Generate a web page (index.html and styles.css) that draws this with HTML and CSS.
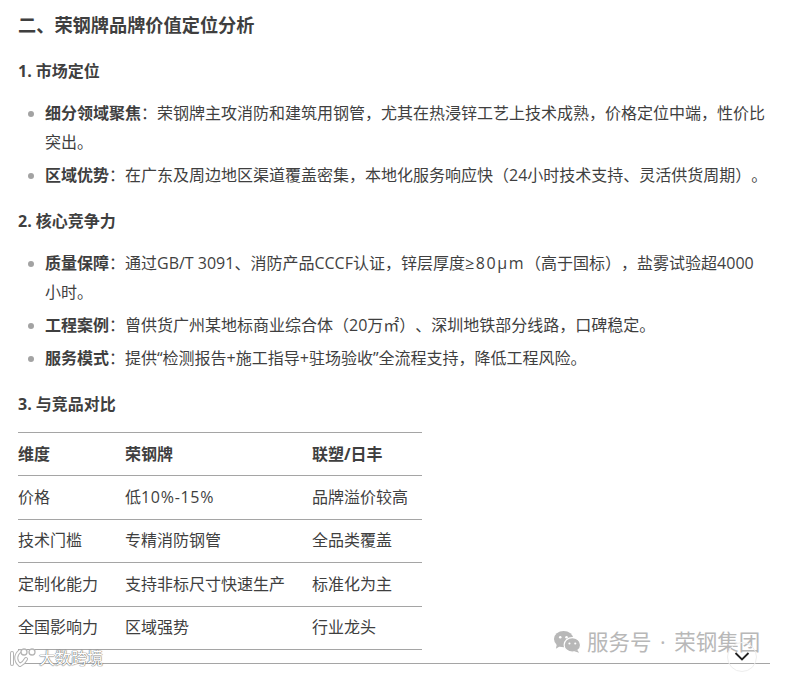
FILE: index.html
```html
<!DOCTYPE html>
<html lang="zh-CN">
<head>
<meta charset="utf-8">
<title>荣钢牌品牌价值定位分析</title>
<link rel="stylesheet" href="styles.css">
</head>
<body>
<main class="article">
  <h2 class="h2">二、荣钢牌品牌价值定位分析</h2>
  <h3 class="h3 first">1. 市场定位</h3>
  <ul class="list">
    <li><strong>细分领域聚焦</strong>：荣钢牌主攻消防和建筑用钢管，尤其在热浸锌工艺上技术成熟，价格定位中端，性价比突出。</li>
    <li><strong>区域优势</strong>：在广东及周边地区渠道覆盖密集，本地化服务响应快（24小时技术支持、灵活供货周期）。</li>
  </ul>
  <h3 class="h3">2. 核心竞争力</h3>
  <ul class="list">
    <li><strong>质量保障</strong>：通过GB/T 3091、消防产品CCCF认证，锌层厚度<span class="wider">≥80μm</span>（高于国标），盐雾试验超4000<span class="keep">小时。</span></li>
    <li><strong>工程案例</strong>：曾供货广州某地标商业综合体（20万㎡）、深圳地铁部分线路，口碑稳定。</li>
    <li><strong>服务模式</strong>：提供“检测报告+施工指导+驻场验收”全流程支持，降低工程风险。</li>
  </ul>
  <h3 class="h3">3. 与竞品对比</h3>
  <table class="compare">
    <thead>
      <tr><th class="col-a">维度</th><th class="col-b">荣钢牌</th><th class="col-c">联塑/日丰</th></tr>
    </thead>
    <tbody>
      <tr><td>价格</td><td>低<span class="wide">10%-15%</span></td><td>品牌溢价较高</td></tr>
      <tr><td>技术门槛</td><td>专精消防钢管</td><td>全品类覆盖</td></tr>
      <tr><td>定制化能力</td><td>支持非标尺寸快速生产</td><td>标准化为主</td></tr>
      <tr><td>全国影响力</td><td>区域强势</td><td>行业龙头</td></tr>
    </tbody>
  </table>
  <hr class="rule">
</main>
<div class="mark-left">
  <svg class="mark-left-icon" width="30" height="20" viewBox="0 0 30 20" aria-hidden="true">
    <path d="M3 5v11M11 3C6 7 6 13 11 17M17 11c-2 4-4 5-6 6" fill="none" stroke="#b4b4b4" stroke-width="4" stroke-linecap="round"/>
    <path d="M3 5v11M11 3C6 7 6 13 11 17M17 11c-2 4-4 5-6 6" fill="none" stroke="#fff" stroke-width="2" stroke-linecap="round"/>
    <circle cx="15" cy="4" r="3" fill="#fff" stroke="#b4b4b4" stroke-width="1.300"/>
    <circle cx="23" cy="4" r="3" fill="#fff" stroke="#b4b4b4" stroke-width="1.300"/>
  </svg>
  <span>大数跨境</span>
</div>
<div class="mark-right">
  <svg class="mark-right-icon" width="29" height="24" viewBox="0 0 30 24" aria-hidden="true">
    <ellipse cx="11" cy="9" rx="10" ry="8.5" fill="#b8b8b8"/>
    <path d="M4 14l-1 5 5-3z" fill="#b8b8b8"/>
    <ellipse cx="20" cy="15" rx="8.5" ry="7.5" fill="#b8b8b8" stroke="#fff" stroke-width="1.2"/>
    <path d="M25 20l2 3-5-1.500z" fill="#b8b8b8"/>
    <circle cx="7.500" cy="7" r="1.300" fill="#fff"/>
    <circle cx="14" cy="7" r="1.300" fill="#fff"/>
    <circle cx="17" cy="13.500" r="1.100" fill="#fff"/>
    <circle cx="23" cy="13.500" r="1.100" fill="#fff"/>
  </svg>
  <span>服务号 · 荣钢集团</span>
</div>
<div class="more" aria-hidden="true">
  <svg width="16" height="9" viewBox="0 0 16 9"><path d="M1.500 1l6.500 6.500L14.500 1" fill="none" stroke="#222" stroke-width="1.800"/></svg>
</div>
</body>
</html>
```
FILE: styles.css
```css
html, body {
  margin: 0;
  padding: 0;
  height: 673px;
  overflow: hidden;
  background: #fff;
}
body {
  position: relative;
  font-family: "Open Sans", "Noto Sans CJK SC", sans-serif;
  font-size: 16px;
  color: #3f3f3f;
  text-spacing-trim: space-all;
}
.article {
  padding: 11px 16px 0 18px;
}
.h2 {
  margin: 0;
  font-size: 18.2px;
  line-height: 29px;
  font-weight: 700;
}
.h3 {
  margin: 17px 0 0;
  font-size: 16px;
  line-height: 29px;
  font-weight: 700;
}
.list {
  margin: 13px 0 0;
  padding: 0 0 0 27px;
  list-style: none;
}
.list li {
  position: relative;
  line-height: 29px;
  margin-bottom: 4px;
}
.list li::before {
  content: "";
  position: absolute;
  left: -17px;
  top: 12px;
  width: 6px;
  height: 6px;
  border-radius: 50%;
  background: #a3a3a3;
}
.list strong {
  font-weight: 700;
}
.wide {
  letter-spacing: 0.7px;
}
.wider {
  letter-spacing: 1.6px;
}
.keep {
  white-space: nowrap;
}
.compare {
  margin-top: 13px;
  width: 404px;
  border-collapse: collapse;
  table-layout: fixed;
  border-top: 1px solid #a5a5a5;
}
.compare th, .compare td {
  height: 39.4px;
  padding: 0 0 3px;
  text-align: left;
  font-size: 16px;
  border-bottom: 1px solid #a5a5a5;
  white-space: nowrap;
}
.compare th {
  font-weight: 700;
}
.col-a { width: 107px; }
.col-b { width: 187px; }
.col-c { width: 110px; }
.rule {
  margin: 13px 0 0;
  width: 752px;
  height: 1px;
  border: 0;
  background: #a5a5a5;
}
.mark-left {
  position: absolute;
  left: 9px;
  top: 647px;
  display: flex;
  align-items: center;
  font-size: 16px;
  line-height: 22px;
  color: #fff;
  text-shadow: 0 0 1px #777, 0 0 1px #777, 0 0 1px #777;
}
.mark-right {
  position: absolute;
  left: 553px;
  top: 628px;
  display: flex;
  align-items: center;
  gap: 5px;
  font-size: 21.5px;
  line-height: 28px;
  color: #b8b8b8;
  word-spacing: 3px;
}
.more {
  position: absolute;
  left: 727px;
  top: 642px;
  width: 30px;
  height: 30px;
  box-sizing: border-box;
  border: 1px solid #eee;
  border-radius: 50%;
  display: flex;
  justify-content: center;
  padding-top: 9px;
}
.more svg {
  display: block;
}
```
